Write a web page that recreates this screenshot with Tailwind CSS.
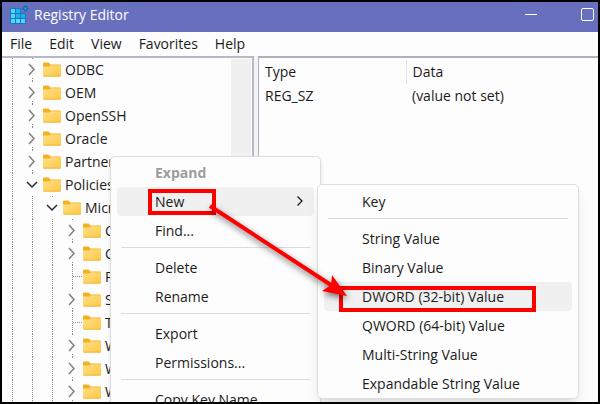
<!DOCTYPE html>
<html lang="en">
<head>
    <meta charset="UTF-8">
    <meta name="viewport" content="width=device-width, initial-scale=1.0">
    <title>Registry Editor</title>
    <script src="https://cdn.jsdelivr.net/npm/@tailwindcss/browser@4"></script>
</head>
<body class="bg-black font-['Open_Sans','Noto_Sans',sans-serif] text-sm text-[#1b1b1b]">
    <!-- Shared shapes -->
    <svg class="absolute h-0 w-0">
        <defs>
            <linearGradient id="folderFill" x1="0" y1="0" x2="1" y2="1">
                <stop offset="0" stop-color="#ffdf8c"/>
                <stop offset="1" stop-color="#fdc843"/>
            </linearGradient>
        </defs>
        <symbol id="folder" viewBox="0 0 18 15">
            <path d="M0 1.5Q0 .5 1 .5H5.6L7.5 2.5H17Q18 2.5 18 3.5V8H0Z" fill="#f3b122"/>
            <path d="M0 4.5H6.5L8 3.2H18V13.6Q18 14.5 17 14.5H1Q0 14.5 0 13.6Z" fill="url(#folderFill)"/>
            <path d="M.5 14.2H17.5" stroke="#eeb02c" stroke-width=".8"/>
        </symbol>
    </svg>

    <div class="relative flex h-screen flex-col overflow-hidden border-2 border-black bg-[#fdfdfd]">
        <!-- Title bar -->
        <header class="flex h-[30px] shrink-0 items-center bg-[#6870be] pl-2 text-white">
            <svg class="mr-[5px] mb-1.5 h-[19px] w-[19px]" viewBox="0 0 19 19">
                <path d="M0 3H11V8H16V19H0Z" fill="#0c7fc4"/>
                <g fill="#5cd2f8">
                    <path d="M1 4h4v4h-4zM1 9h4v4h-4zM1 14h4v4h-4zM6 14h4v4h-4zM11 14h4v4h-4z"/>
                </g>
                <g fill="#27aee8">
                    <path d="M6 4h4v4h-4zM6 9h4v4h-4zM11 9h4v4h-4z"/>
                </g>
                <path d="M15.500 0L19 3.500L15.500 7L12 3.500Z" fill="#0f6db0"/>
                <path d="M15.500 2L17 3.500L15.500 5L14 3.500Z" fill="#2b9fd8"/>
            </svg>
            <h1 class="mb-1 flex-1 text-sm">Registry Editor</h1>
            <button aria-label="Minimize" class="mr-11 mb-1.5 h-3 w-3"><span class="block h-px bg-white"></span></button>
            <button aria-label="Maximize" class="mr-1 mb-1.5 h-[13px] w-[13px] rounded-[2px] border border-white"></button>
        </header>

        <!-- Menu bar -->
        <nav class="flex h-6 shrink-0 items-center gap-[17px] pl-2">
            <button>File</button>
            <button>Edit</button>
            <button>View</button>
            <button>Favorites</button>
            <button>Help</button>
        </nav>

        <main class="flex min-h-0 flex-1 gap-1 bg-[#f4f4f6]">
            <!-- Key tree -->
            <section class="flex w-[252px] shrink-0 overflow-hidden border-t-2 border-r-2 border-[#b9b9c6] bg-[#fdfdfd]">
                <ul id="tree" class="flex-1"></ul>
                <div class="mt-px mr-px w-5 bg-[#f0f0f0]"></div>
            </section>

            <!-- Values -->
            <section class="flex-1 border-t-2 border-l border-[#b0b0ba] bg-[#fdfdfd] pt-0.5 pl-1.5">
                <table class="w-full table-fixed text-left">
                    <thead>
                        <tr class="h-6">
                            <th class="w-[141px] border-r border-[#e2e2e2] font-normal">Type</th>
                            <th class="pl-1.5 font-normal">Data</th>
                        </tr>
                    </thead>
                    <tbody>
                        <tr class="h-6">
                            <td>REG_SZ</td>
                            <td class="pl-1.5">(value not set)</td>
                        </tr>
                    </tbody>
                </table>
            </section>
        </main>

        <!-- Context menu -->
        <div class="absolute top-[154px] left-[108px] w-[211px] rounded-[5px] border border-[#dedede] bg-[#fdfdfd] px-1.5 pt-px shadow-md">
            <button class="flex h-[29px] w-full items-center pl-[38px] font-bold text-[#9d9d9d]" disabled>Expand</button>
            <button class="flex h-[29px] w-full items-center justify-between rounded bg-[#f0f0f0] pr-2.5 pl-[38px]">
                New
                <svg class="mb-0.5 h-3 w-2" viewBox="0 0 8 12"><path d="M1.5 1.5L6 6L1.5 10.5" fill="none" stroke="#1b1b1b" stroke-width="1.3"/></svg>
            </button>
            <button class="flex h-[29px] w-full items-center pl-[38px]">Find...</button>
            <hr class="mx-1 mt-[2px] mb-[5px] border-[#dcdcdc]">
            <button class="flex h-[29px] w-full items-center pl-[38px]">Delete</button>
            <button class="flex h-[29px] w-full items-center pl-[38px]">Rename</button>
            <hr class="mx-1 mt-[2px] mb-[5px] border-[#dcdcdc]">
            <button class="flex h-[29px] w-full items-center pl-[38px]">Export</button>
            <button class="flex h-[29px] w-full items-center pl-[38px]">Permissions...</button>
            <hr class="mx-1 mt-[2px] mb-[5px] border-[#dcdcdc]">
            <button class="flex h-[29px] w-full items-center pl-[38px]">Copy Key Name</button>
        </div>

        <!-- New submenu -->
        <div class="absolute top-[182px] left-[315px] w-[262px] rounded-[5px] border border-[#dedede] bg-[#fdfdfd] px-1.5 pt-0.5 shadow-lg">
            <button class="flex h-[29px] w-full items-center pl-[38px]">Key</button>
            <hr class="mx-1 mt-[2px] mb-[5px] border-[#dcdcdc]">
            <button class="flex h-[29px] w-full items-center pl-[38px]">String Value</button>
            <button class="flex h-[29px] w-full items-center pl-[38px]">Binary Value</button>
            <button class="flex h-[29px] w-full items-center rounded bg-[#f0f0f0] pl-[38px]">DWORD (32-bit) Value</button>
            <button class="flex h-[29px] w-full items-center pl-[38px]">QWORD (64-bit) Value</button>
            <button class="flex h-[29px] w-full items-center pl-[38px]">Multi-String Value</button>
            <button class="flex h-[29px] w-full items-center pl-[38px]">Expandable String Value</button>
        </div>

        <!-- Highlight boxes and arrow -->
        <svg class="pointer-events-none absolute -top-0.5 -left-0.5 h-[404px] w-[600px]" viewBox="0 0 600 404">
            <g fill="none" stroke="#fe0000" stroke-width="4">
                <rect x="150" y="191" width="64" height="22"/>
                <rect x="341" y="288" width="193" height="22"/>
            </g>
            <g class="drop-shadow-[1px_3px_3px_#00000088]">
                <path d="M210 206L334 287" stroke="#fe0000" stroke-width="4"/>
                <path d="M347 296L332 275L331 285L322 291Z" fill="#fe0000"/>
            </g>
        </svg>
    </div>

    <script>
        // level = depth in the tree, state = open / closed / leaf
        const keys = [
            { name: 'ODBC', level: 1, state: 'closed' },
            { name: 'OEM', level: 1, state: 'closed' },
            { name: 'OpenSSH', level: 1, state: 'closed' },
            { name: 'Oracle', level: 1, state: 'closed' },
            { name: 'Partner', level: 1, state: 'closed' },
            { name: 'Policies', level: 1, state: 'open' },
            { name: 'Micr', level: 2, state: 'open' },
            { name: 'C', level: 3, state: 'closed' },
            { name: 'C', level: 3, state: 'closed' },
            { name: 'P', level: 3, state: 'leaf' },
            { name: 'S', level: 3, state: 'closed' },
            { name: 'T', level: 3, state: 'leaf' },
            { name: 'W', level: 3, state: 'closed' },
            { name: 'W', level: 3, state: 'closed' },
            { name: 'W', level: 3, state: 'closed' }
        ];

        const dots = 'fill="none" stroke="#8c8c8c" stroke-dasharray="1 1"';
        const cells = {
            line: `<path d="M10.5 0V23" ${dots}/>`,
            closed: `<path d="M10.5 0V2M10.5 20V23" ${dots}/><path d="M7 6L12 11.5L7 17" fill="none" stroke="#808080" stroke-width="1.5"/>`,
            open: `<path d="M10.5 0V2" ${dots}/><path d="M5 9L10 14L15 9" fill="none" stroke="#2b2b2b" stroke-width="1.5"/>`,
            leaf: `<path d="M10.5 0V23M11 11.5H20" ${dots}/>`
        };
        // guide column to the left of a key: the line only shows below an open parent
        const cell = kind => `<svg class="h-[23px] w-5 shrink-0" viewBox="0 0 20 23">${cells[kind]}</svg>`;

        document.getElementById('tree').innerHTML = keys.map(key => `
            <li class="flex h-[23px] items-center">
                ${cell('line').repeat(key.level)}${cell(key.state)}
                <svg class="mr-1 ml-px h-[15px] w-[18px] shrink-0"><use href="#folder"/></svg>
                <span>${key.name}</span>
            </li>`).join('');
    </script>
</body>
</html>
